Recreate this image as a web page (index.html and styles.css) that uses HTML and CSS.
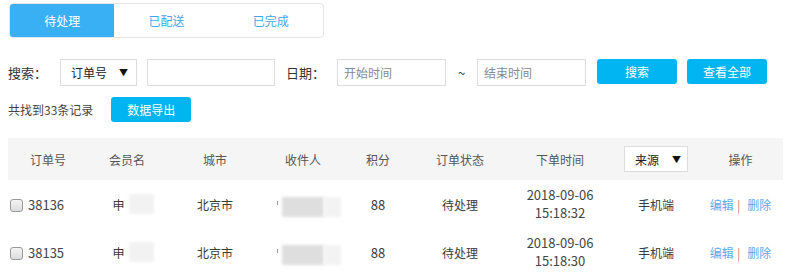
FILE: index.html
```html
<!DOCTYPE html>
<html lang="zh-CN">
<head>
    <meta charset="UTF-8">
    <title>订单管理</title>
    <link rel="stylesheet" href="styles.css">
</head>
<body>
    <div class="tabs">
        <div class="tab active">待处理</div>
        <div class="tab">已配送</div>
        <div class="tab">已完成</div>
    </div>

    <div class="search-row">
        <span class="label">搜索：</span>
        <div class="select select-type">订单号<span class="arrow">▼</span></div>
        <input class="input input-key" type="text">
        <span class="label label-date">日期：</span>
        <input class="input input-date" type="text" placeholder="开始时间">
        <span class="tilde">~</span>
        <input class="input input-date" type="text" placeholder="结束时间">
        <button class="btn btn-search">搜索</button>
        <button class="btn btn-all">查看全部</button>
    </div>

    <div class="count-row">
        <span class="count">共找到33条记录</span>
        <button class="btn btn-export">数据导出</button>
    </div>

    <table class="orders">
        <colgroup>
            <col style="width:80px">
            <col style="width:78px">
            <col style="width:98px">
            <col style="width:78px">
            <col style="width:72px">
            <col style="width:92px">
            <col style="width:108px">
            <col style="width:84px">
            <col style="width:85px">
        </colgroup>
        <thead>
            <tr>
                <th>订单号</th>
                <th>会员名</th>
                <th>城市</th>
                <th>收件人</th>
                <th>积分</th>
                <th>订单状态</th>
                <th>下单时间</th>
                <th><div class="select select-src">来源<span class="arrow">▼</span></div></th>
                <th>操作</th>
            </tr>
        </thead>
        <tbody>
            <tr>
                <td class="id"><span class="check"></span>38136</td>
                <td><span class="name name-member">申<span class="blur blur-name"></span></span></td>
                <td>北京市</td>
                <td><span class="name name-recv"><span class="tick"></span><span class="blur blur-recv"></span><span class="blur blur-tail"></span></span></td>
                <td class="num">88</td>
                <td>待处理</td>
                <td class="time"><div>2018-09-06</div><div>15:18:32</div></td>
                <td>手机端</td>
                <td class="ops"><a href="#">编辑</a><span class="sep">|</span><a href="#">删除</a></td>
            </tr>
            <tr>
                <td class="id"><span class="check"></span>38135</td>
                <td><span class="name name-member">申<span class="blur blur-name"></span></span></td>
                <td>北京市</td>
                <td><span class="name name-recv"><span class="tick"></span><span class="blur blur-recv"></span><span class="blur blur-tail"></span></span></td>
                <td class="num">88</td>
                <td>待处理</td>
                <td class="time"><div>2018-09-06</div><div>15:18:30</div></td>
                <td>手机端</td>
                <td class="ops"><a href="#">编辑</a><span class="sep">|</span><a href="#">删除</a></td>
            </tr>
        </tbody>
    </table>
</body>
</html>
```

FILE: styles.css
```css
body {
    margin: 0;
    padding: 3px 5px 0 8px;
    font-family: "Noto Sans CJK SC", "Liberation Sans", sans-serif;
    font-size: 13px;
    color: #333;
    background: #fff;
}
.tabs {
    display: flex;
    width: 313px;
    height: 33px;
    margin-left: 1px;
    border: 1px solid #e6e6e6;
    border-radius: 4px;
    overflow: hidden;
}
.tab {
    width: 105px;
    line-height: 33px;
    text-align: center;
    font-size: 12px;
    color: #3ea8ec;
}
.tab.active {
    background-color: #39b0f3;
    color: #fff;
}
.search-row {
    display: flex;
    align-items: center;
    margin-top: 21px;
    height: 27px;
}
.label {
    width: 52px;
    color: #333;
}
.label-date {
    width: 51px;
    margin-left: 11px;
}
.select {
    box-sizing: border-box;
    display: flex;
    align-items: center;
    justify-content: space-between;
    height: 27px;
    border: 1px solid #ddd;
    background: #fff;
    font-size: 12px;
    color: #222;
}
.select-type {
    width: 77px;
    padding: 0 8px 0 10px;
}
.arrow {
    font-size: 9px;
    color: #111;
}
.input {
    box-sizing: border-box;
    height: 27px;
    border: 1px solid #ddd;
    padding: 0 6px;
    font-family: inherit;
    font-size: 12px;
    outline: none;
}
.input::placeholder {
    color: #888;
}
.input-key {
    width: 128px;
    margin-left: 10px;
}
.input-date {
    width: 109px;
}
.tilde {
    width: 31px;
    text-align: center;
    color: #444;
}
.btn {
    box-sizing: border-box;
    width: 80px;
    height: 25px;
    border: none;
    border-radius: 3px;
    background-color: #00b5f1;
    color: #fff;
    font-family: inherit;
    font-size: 12px;
    cursor: pointer;
}
.btn-search {
    margin-left: 11px;
    align-self: flex-start;
}
.btn-all {
    margin-left: 10px;
    align-self: flex-start;
}
.count-row {
    display: flex;
    align-items: center;
    margin-top: 11px;
    height: 25px;
}
.count {
    font-size: 12px;
    color: #444;
}
.btn-export {
    margin-left: 18px;
}
.orders {
    margin-top: 16px;
    width: 775px;
    table-layout: fixed;
    border-collapse: collapse;
    font-size: 12px;
}
.orders th {
    height: 42px;
    padding: 0;
    background-color: #f5f5f5;
    font-weight: normal;
    color: #555;
    text-align: center;
}
.orders td {
    height: 48px;
    padding: 0;
    text-align: center;
    color: #3a3a3a;
    line-height: 17px;
}
.select-src {
    width: 64px;
    height: 26px;
    margin-left: 10px;
    padding: 0 6px 0 10px;
    font-size: 12px;
}
.orders td.id {
    text-align: left;
    padding-left: 2px;
    font-size: 13px;
    color: #444;
}
.check {
    display: inline-block;
    box-sizing: border-box;
    width: 13px;
    height: 13px;
    margin-right: 5px;
    vertical-align: -2px;
    border: 1px solid #9a9a9a;
    border-radius: 3px;
    background: linear-gradient(#f4f4f4, #dcdcdc);
}
.name {
    display: inline-flex;
    align-items: center;
}
.name-member {
    margin-left: 12px;
}
.name-recv {
    margin-left: 12px;
}
.blur {
    display: inline-block;
    height: 20px;
    filter: blur(1.5px);
}
.blur-name {
    width: 25px;
    margin-left: 4px;
    background-color: #f2f2f2;
}
.blur-recv {
    width: 42px;
    margin-left: 4px;
    background-color: #dedede;
}
.blur-tail {
    width: 17px;
    background-color: #f3f3f3;
}
.tick {
    display: inline-block;
    width: 1px;
    height: 4px;
    background-color: #999;
    margin-top: -8px;
}
.num {
    font-size: 13px;
}
.orders td.time {
    font-size: 13px;
    line-height: 18px;
    color: #444;
}
.ops a {
    color: #5fa8ec;
    text-decoration: none;
}
.sep {
    color: #b08a70;
    margin: 0 7px 0 3px;
}
```
